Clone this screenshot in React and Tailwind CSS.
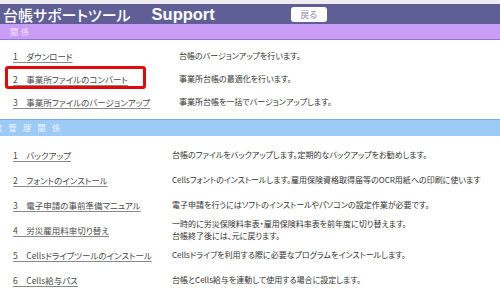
export default function App() {
  const font = "font-['Noto_Sans_CJK_JP','Noto_Sans',sans-serif] [font-feature-settings:'palt']";
  const sec1 = [
    ["1", "ダウンロード", "台帳のバージョンアップを行います。"],
    ["2", "事業所ファイルのコンバート", "事業所台帳の最適化を行います。"],
    ["3", "事業所ファイルのバージョンアップ", "事業所台帳を一括でバージョンアップします。"],
  ];
  const sec2 = [
    ["1", "バックアップ", ["台帳のファイルをバックアップします。定期的なバックアップをお勧めします。"]],
    ["2", "フォントのインストール", ["Cellsフォントのインストールします。雇用保険資格取得届等のOCR用紙への印刷に使います"]],
    ["3", "電子申請の事前準備マニュアル", ["電子申請を行うにはソフトのインストールやパソコンの設定作業が必要です。"]],
    ["4", "労災雇用料率切り替え", ["一時的に労災保険料率表・雇用保険料率表を前年度に切り替えます。", "台帳終了後には、元に戻ります。"]],
    ["5", "Cellsドライブツールのインストール", ["Cellsドライブを利用する際に必要なプログラムをインストールします。"]],
    ["6", "Cells給与パス", ["台帳とCells給与を連動して使用する場合に設定します。"]],
  ];
  const link = "text-[8.5px] leading-[12px] text-[#4a4a4a] underline decoration-[#888] underline-offset-2 whitespace-pre";
  return (
    <div className={`w-[500px] h-[308px] bg-white overflow-hidden ${font}`}>
      <div className="h-[4px] bg-[#ececf2]" />
      <div className="h-[20px] bg-[#5f5f96] flex items-center">
        <span className="ml-[3px] text-white text-[15px] leading-none font-medium">台帳サポートツール</span>
        <span className="ml-[21px] text-white text-[16.5px] leading-none font-semibold font-['Liberation_Sans',sans-serif]">Support</span>
        <div className="ml-[76px] w-[36px] h-[15px] bg-white rounded-[3px] flex items-center justify-center text-[9px] text-[#8f86b4] leading-none">戻る</div>
      </div>
      <div className="h-[16px] bg-[#c99cf6] border-b border-[#9b72c6] flex items-center pl-[10px] text-[8px] text-[#f3e6ff] tracking-[3px]">関係</div>
      <div className="pt-[4px] h-[79px]">
        {sec1.map(([n, l, d], i) => (
          <div key={i} className="h-[23px] flex items-center relative">
            <div className="ml-[13px] w-[166px] flex items-center">
              <span className={link}>{n + "\u2002\u2002" + l}</span>
            </div>
            <span className="text-[8px] leading-[12px] text-[#333] whitespace-nowrap">{d}</span>
            {i === 1 && (
              <div className="absolute left-[5px] top-[-1px] w-[141px] h-[23px] border-[3px] border-[#e00a0a] rounded-[3px]" />
            )}
          </div>
        ))}
      </div>
      <div className="h-[17px] bg-[#9ccbf6] border-t border-[#7ea9dc] flex items-center text-[8px] text-[#f2f8ff] tracking-[6.5px] whitespace-nowrap overflow-hidden">
        <span className="ml-[-6px]">務管理関係</span>
      </div>
      <div className="pt-[6px]">
        {sec2.map(([n, l, d], i) => (
          <div key={i} className="h-[25px] flex items-center">
            <div className="ml-[13px] w-[159px] flex items-center">
              <span className={link}>{n + "\u2002\u2002" + l}</span>
            </div>
            <div className="flex flex-col text-[8px] leading-[12px] text-[#333] whitespace-nowrap">
              {d.map((t, j) => (
                <span key={j}>{t}</span>
              ))}
            </div>
          </div>
        ))}
      </div>
    </div>
  );
}
